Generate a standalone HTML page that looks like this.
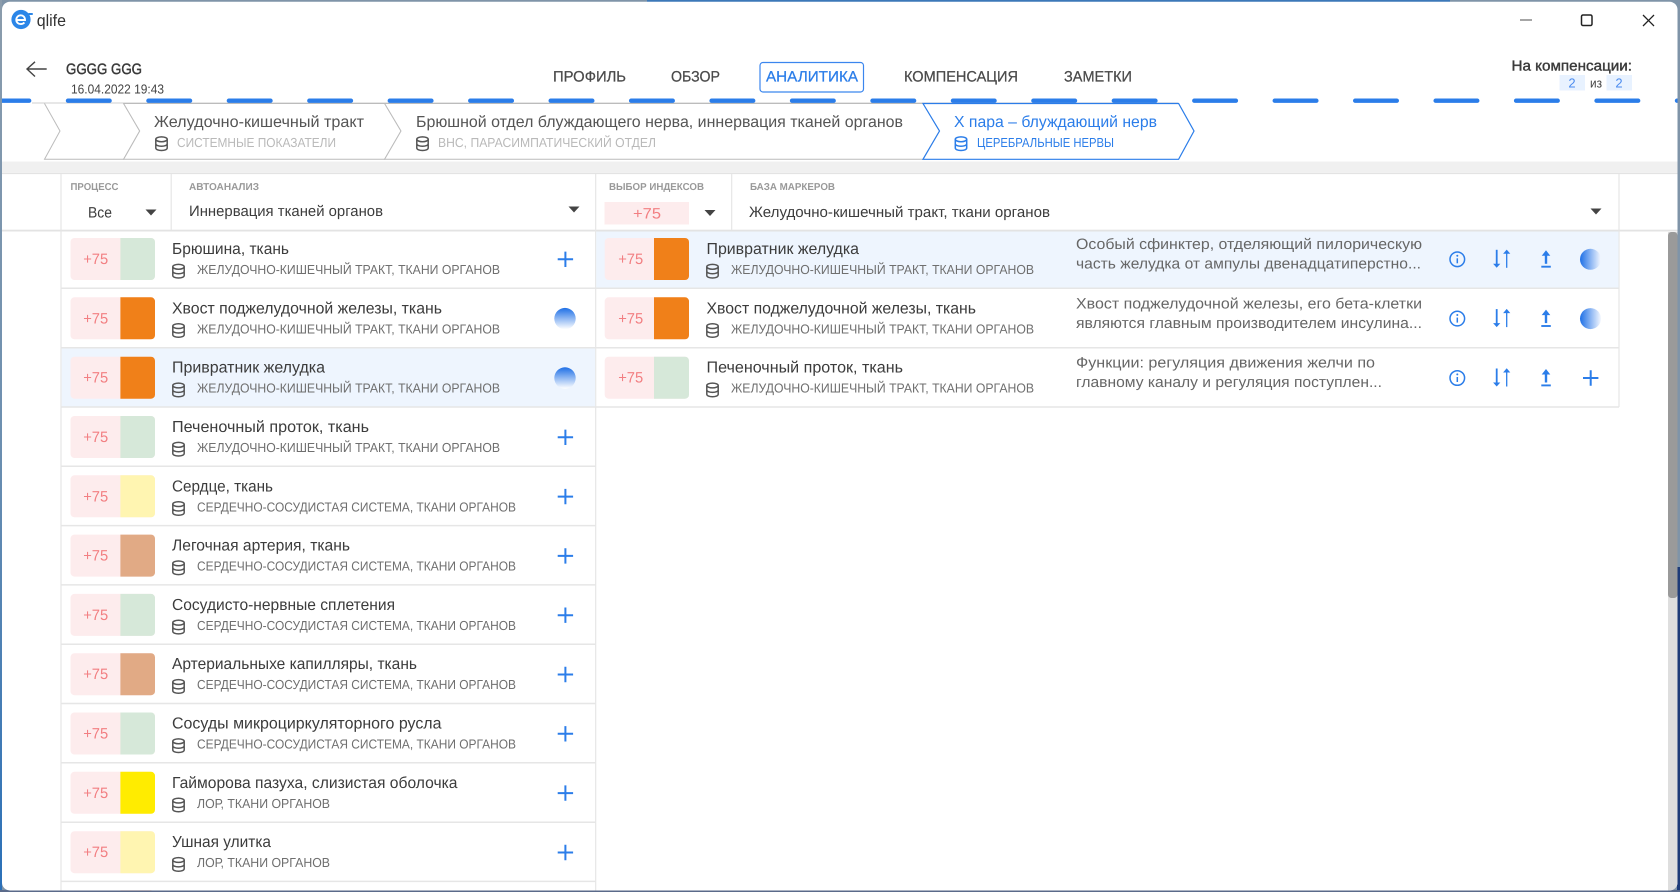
<!DOCTYPE html>
<html lang="ru"><head><meta charset="utf-8"><title>qlife</title>
<style>
html,body{margin:0;padding:0;width:1680px;height:892px;overflow:hidden;background:#fff}
svg{display:block}
text{font-family:"Liberation Sans",sans-serif;fill:#3a3a3a;text-rendering:geometricPrecision}
.t{font-size:16px;fill:#3c3c3c}
.s{font-size:13px;fill:#6f6f6f}
.n{font-size:15px;fill:#f27f82;text-anchor:middle}
.d{font-size:15px;fill:#666}
.l{font-size:10px;fill:#999;font-weight:bold}
.v{font-size:15px;fill:#3c3c3c}
.nav{font-size:15px;fill:#4a4a4a;stroke:#4a4a4a;stroke-width:.25px}
.b{font-size:16px;fill:#555}
.bs{font-size:13px;fill:#b9b9b9}
</style></head><body>
<svg width="1680" height="892" viewBox="0 0 1680 892" xmlns="http://www.w3.org/2000/svg">
<defs>
<linearGradient id="gv" x1="0" y1="0" x2="0" y2="1"><stop offset="0" stop-color="#1f70e6"/><stop offset="1" stop-color="#fff"/></linearGradient>
<linearGradient id="gh" x1="0" y1="0" x2="1" y2="0"><stop offset="0" stop-color="#1f70e6"/><stop offset="1" stop-color="#f4f8ff"/></linearGradient>
<linearGradient id="gl" x1="0" y1="0" x2="0" y2="1"><stop offset="0" stop-color="#8b9cac"/><stop offset=".5" stop-color="#6c8fb0"/><stop offset="1" stop-color="#2a70b8"/></linearGradient>
<g id="db" fill="none" stroke="#555" stroke-width="1.5"><ellipse cx="6.5" cy="2.8" rx="5.7" ry="2.4"/><path d="M.8 2.8V11.5C.8 13 3.3 14 6.5 14S12.2 13 12.2 11.5V2.8M.8 7.2C.8 8.7 3.3 9.7 6.5 9.7S12.2 8.7 12.2 7.2"/></g>
<g id="dbb" fill="none" stroke="#2b7de9" stroke-width="1.5"><ellipse cx="6.5" cy="2.8" rx="5.7" ry="2.4"/><path d="M.8 2.8V11.5C.8 13 3.3 14 6.5 14S12.2 13 12.2 11.5V2.8M.8 7.2C.8 8.7 3.3 9.7 6.5 9.7S12.2 8.7 12.2 7.2"/></g>
<path id="plus" d="M-7.7 0H7.7M0-7.7V7.7" stroke="#2b7de9" stroke-width="2" fill="none"/>
<path id="arr" d="M-5.5 2.5 0-3.5 5.5 2.5Z" transform="rotate(180)" fill="#444"/>
<g id="ctl"><circle cx="0" cy="0" r="7.3" fill="none" stroke="#2b7de9" stroke-width="1.5"/><path d="M0-1V4" stroke="#2b7de9" stroke-width="1.5"/><circle cx="0" cy="-3.6" r="1" fill="#2b7de9"/>
<path d="M39.4 -9.5V6" stroke="#2b7de9" stroke-width="1.8" fill="none"/><path d="M35.8 4.5H43L39.4 8.5Z" fill="#2b7de9"/>
<path d="M49.4 -6V8.5" stroke="#2b7de9" stroke-width="1.3" fill="none"/><path d="M45.8 -5.5H53L49.4 -9.7Z" fill="#2b7de9"/>
<path d="M88.7 -5V4.5" stroke="#2b7de9" stroke-width="2.4"/><path d="M84.4 -3.5H93L88.7 -9Z" fill="#2b7de9"/><path d="M84 7.4H93.5" stroke="#2b7de9" stroke-width="1.9"/></g>
<g id="lc"><rect x="70.5" y="0" width="84.5" height="42" rx="4" fill="#fdeced"/></g>
<g id="rc"><rect x="604.7" y="0" width="84.3" height="42" rx="4" fill="#fdeced"/></g>
<path id="ls" d="M120.4 0H151a4 4 0 0 1 4 4V38a4 4 0 0 1-4 4H120.4Z"/>
<path id="rs" d="M654 0H685a4 4 0 0 1 4 4V38a4 4 0 0 1-4 4H654Z"/>
<clipPath id="win"><rect x="2" y="1.7" width="1675.5" height="888.8" rx="8"/></clipPath>
</defs>

<rect width="1680" height="892" fill="#7f94a8"/>
<rect x="0" y="0" width="2" height="892" fill="url(#gl)"/>
<rect x="647" y="0" width="803" height="2" fill="#3c78b8"/>
<rect x="1677" y="567" width="3" height="325" fill="#1d3b78"/>
<rect x="0" y="890" width="1680" height="2" fill="#5a6a8a"/>
<rect x="2" y="1.7" width="1675.5" height="888.8" rx="8" fill="#fff"/>

<g clip-path="url(#win)">
<!-- title bar -->
<circle cx="21" cy="19.5" r="9.6" fill="#2b86e8"/>
<path d="M16.5 20H25C25 17 23 15.3 20.8 15.3C18.2 15.3 16.3 17.3 16.3 19.8C16.3 22.3 18.3 24.1 20.8 24.1C22.2 24.1 23.5 23.5 24.4 22.5" fill="none" stroke="#fff" stroke-width="1.9"/>
<rect x="28" y="13" width="5" height="2" rx="1" fill="#2b86e8"/>
<text x="36.7" y="26" style="font-size:16.5px;fill:#333" textLength="29.3" lengthAdjust="spacingAndGlyphs">qlife</text>
<path d="M1520 20H1532" stroke="#888" stroke-width="1.4"/>
<rect x="1581.5" y="15" width="10.5" height="10.5" rx="1.5" fill="none" stroke="#222" stroke-width="1.5"/>
<path d="M1643 15 1654 26M1654 15 1643 26" stroke="#222" stroke-width="1.3"/>

<!-- header -->
<path d="M46.7 69H27M35 61.8 27 69 35 76.5" fill="none" stroke="#444" stroke-width="1.4"/>
<text x="66" y="74" style="font-size:15px;fill:#3a3a3a;stroke:#3a3a3a;stroke-width:.45px" textLength="76" lengthAdjust="spacingAndGlyphs">GGGG GGG</text>
<text x="71" y="93.3" style="font-size:13px;fill:#444" textLength="93" lengthAdjust="spacingAndGlyphs">16.04.2022 19:43</text>

<text x="553" y="81.5" class="nav" textLength="73" lengthAdjust="spacingAndGlyphs">ПРОФИЛЬ</text>
<text x="671" y="81.5" class="nav" textLength="49" lengthAdjust="spacingAndGlyphs">ОБЗОР</text>
<rect x="760" y="62.5" width="103.5" height="29.5" rx="3" fill="#fff" stroke="#3b86ee" stroke-width="1.2"/>
<text x="766" y="81.5" class="nav" style="fill:#2b7de9;stroke:#2b7de9" textLength="92" lengthAdjust="spacingAndGlyphs">АНАЛИТИКА</text>
<text x="904" y="81.5" class="nav" textLength="114" lengthAdjust="spacingAndGlyphs">КОМПЕНСАЦИЯ</text>
<text x="1064" y="81.5" class="nav" textLength="68" lengthAdjust="spacingAndGlyphs">ЗАМЕТКИ</text>

<text x="1511.5" y="70.5" style="font-size:14.5px;fill:#3a3a3a;stroke:#3a3a3a;stroke-width:.4px" textLength="120.5" lengthAdjust="spacingAndGlyphs">На компенсации:</text>
<rect x="1559.5" y="75" width="25.5" height="15.5" fill="#e8f2ff"/><rect x="1606.5" y="75" width="25.5" height="15.5" fill="#e8f2ff"/>
<text x="1572" y="87.5" style="font-size:13px;fill:#4a8bef;text-anchor:middle">2</text>
<text x="1619" y="87.5" style="font-size:13px;fill:#4a8bef;text-anchor:middle">2</text>
<text x="1590" y="87.5" style="font-size:13px;fill:#444" textLength="12" lengthAdjust="spacingAndGlyphs">из</text>

<!-- breadcrumbs -->
<path d="M32 103H1178" stroke="#cfcfcf" stroke-width="1"/>
<path d="M44.5 103.5 60 131 44.5 159.3H123.6L139.7 131 123.6 103.5" fill="#fff" stroke="#bcbcbc" stroke-width="1"/>
<path d="M123.6 103.5H384.6L401 131 384.6 159.3H123.6L139.7 131Z" fill="#fff" stroke="#bcbcbc" stroke-width="1"/>
<path d="M384.6 103.5H923L939.5 131 923 159.3H384.6L401 131Z" fill="#fff" stroke="#bcbcbc" stroke-width="1"/>
<path d="M923 103.5H1178.6L1194 131 1178.6 159.3H923L939.5 131Z" fill="#fff" stroke="#2b7de9" stroke-width="1.2"/>

<text x="154" y="127" class="b" textLength="210" lengthAdjust="spacingAndGlyphs">Желудочно-кишечный тракт</text>
<use href="#db" x="155" y="136.5"/>
<text x="177" y="147" class="bs" textLength="159" lengthAdjust="spacingAndGlyphs">СИСТЕМНЫЕ ПОКАЗАТЕЛИ</text>
<text x="416" y="127" class="b" textLength="487" lengthAdjust="spacingAndGlyphs">Брюшной отдел блуждающего нерва, иннервация тканей органов</text>
<use href="#db" x="416" y="136.5"/>
<text x="438" y="147" class="bs" textLength="218" lengthAdjust="spacingAndGlyphs">ВНС, ПАРАСИМПАТИЧЕСКИЙ ОТДЕЛ</text>
<text x="954" y="127" class="b" style="fill:#2b7de9" textLength="203" lengthAdjust="spacingAndGlyphs">Х пара – блуждающий нерв</text>
<use href="#dbb" x="954.5" y="136.5"/>
<text x="977" y="147" style="font-size:13px;fill:#2b7de9" textLength="137" lengthAdjust="spacingAndGlyphs">ЦЕРЕБРАЛЬНЫЕ НЕРВЫ</text>

<!-- dashes -->
<path d="M-12.45 100.7H1720" stroke="#2b7de9" stroke-width="4.4" stroke-linecap="round" stroke-dasharray="41.6 38.85" fill="none"/>

<!-- band + filter -->
<rect x="2" y="161.5" width="1676" height="10.5" fill="#f0f0f0"/>
<rect x="2" y="172.5" width="1676" height="1.6" fill="#e3e3e3"/>
<rect x="2" y="229.7" width="1676" height="1.8" fill="#e3e3e3"/>
<path d="M61 174V892M595.7 174V892M171.2 174V230M731.7 174V230M1619 174V407" stroke="#e6e6e6" stroke-width="1.2" fill="none"/>
<text x="70.5" y="190" class="l" textLength="48" lengthAdjust="spacingAndGlyphs">ПРОЦЕСС</text>
<text x="189" y="190" class="l" textLength="70" lengthAdjust="spacingAndGlyphs">АВТОАНАЛИЗ</text>
<text x="609" y="190" class="l" textLength="95" lengthAdjust="spacingAndGlyphs">ВЫБОР ИНДЕКСОВ</text>
<text x="750" y="190" class="l" textLength="85" lengthAdjust="spacingAndGlyphs">БАЗА МАРКЕРОВ</text>
<text x="88" y="217.5" class="v" textLength="24" lengthAdjust="spacingAndGlyphs">Все</text>
<use href="#arr" x="151" y="212"/>
<text x="189" y="216" class="v" textLength="194" lengthAdjust="spacingAndGlyphs">Иннервация тканей органов</text>
<use href="#arr" x="574" y="209"/>
<rect x="604.5" y="202" width="84.5" height="22.5" fill="#fdeced"/>
<text x="647" y="218.5" class="n" textLength="28" lengthAdjust="spacingAndGlyphs">+75</text>
<use href="#arr" x="710" y="212.5"/>
<text x="749" y="217" class="v" textLength="301" lengthAdjust="spacingAndGlyphs">Желудочно-кишечный тракт, ткани органов</text>
<use href="#arr" x="1596" y="211"/>

<!-- selected row backgrounds -->
<rect x="61.7" y="347.9" width="533.4" height="58.8" fill="#eef5fe"/>
<rect x="596.3" y="231.5" width="1022.2" height="56.5" fill="#eef5fe"/>

<!-- separators -->
<path d="M61 288.3H1619M61 347.7H1619M61 407H1619M61 466.3H595.7M61 525.6H595.7M61 584.9H595.7M61 644.2H595.7M61 703.5H595.7M61 762.8H595.7M61 822.2H595.7M61 881.4H595.7" stroke="#e6e6e6" stroke-width="1.5" fill="none"/>

<!-- left rows -->
<g transform="translate(0,229)"><use href="#lc" y="9"/><use href="#ls" y="9" fill="#d6e8d9"/><text x="95.7" y="35" class="n" textLength="25" lengthAdjust="spacingAndGlyphs">+75</text><text x="172" y="25" class="t" textLength="117" lengthAdjust="spacingAndGlyphs">Брюшина, ткань</text><use href="#db" x="172" y="35"/><text x="197" y="45" class="s" textLength="303" lengthAdjust="spacingAndGlyphs">ЖЕЛУДОЧНО-КИШЕЧНЫЙ ТРАКТ, ТКАНИ ОРГАНОВ</text><use href="#plus" x="565.4" y="30.3"/></g>
<g transform="translate(0,288.3)"><use href="#lc" y="9"/><use href="#ls" y="9" fill="#f08019"/><text x="95.7" y="35" class="n" textLength="25" lengthAdjust="spacingAndGlyphs">+75</text><text x="172" y="25" class="t" textLength="270" lengthAdjust="spacingAndGlyphs">Хвост поджелудочной железы, ткань</text><use href="#db" x="172" y="35"/><text x="197" y="45" class="s" textLength="303" lengthAdjust="spacingAndGlyphs">ЖЕЛУДОЧНО-КИШЕЧНЫЙ ТРАКТ, ТКАНИ ОРГАНОВ</text><circle cx="565" cy="30.3" r="10.7" fill="url(#gv)"/></g>
<g transform="translate(0,347.7)"><use href="#lc" y="9"/><use href="#ls" y="9" fill="#f08019"/><text x="95.7" y="35" class="n" textLength="25" lengthAdjust="spacingAndGlyphs">+75</text><text x="172" y="25" class="t" textLength="153" lengthAdjust="spacingAndGlyphs">Привратник желудка</text><use href="#db" x="172" y="35"/><text x="197" y="45" class="s" textLength="303" lengthAdjust="spacingAndGlyphs">ЖЕЛУДОЧНО-КИШЕЧНЫЙ ТРАКТ, ТКАНИ ОРГАНОВ</text><circle cx="565" cy="30.3" r="10.7" fill="url(#gv)"/></g>
<g transform="translate(0,407)"><use href="#lc" y="9"/><use href="#ls" y="9" fill="#d6e8d9"/><text x="95.7" y="35" class="n" textLength="25" lengthAdjust="spacingAndGlyphs">+75</text><text x="172" y="25" class="t" textLength="197" lengthAdjust="spacingAndGlyphs">Печеночный проток, ткань</text><use href="#db" x="172" y="35"/><text x="197" y="45" class="s" textLength="303" lengthAdjust="spacingAndGlyphs">ЖЕЛУДОЧНО-КИШЕЧНЫЙ ТРАКТ, ТКАНИ ОРГАНОВ</text><use href="#plus" x="565.4" y="30.3"/></g>
<g transform="translate(0,466.3)"><use href="#lc" y="9"/><use href="#ls" y="9" fill="#fff5b1"/><text x="95.7" y="35" class="n" textLength="25" lengthAdjust="spacingAndGlyphs">+75</text><text x="172" y="25" class="t" textLength="101" lengthAdjust="spacingAndGlyphs">Сердце, ткань</text><use href="#db" x="172" y="35"/><text x="197" y="45" class="s" textLength="319" lengthAdjust="spacingAndGlyphs">СЕРДЕЧНО-СОСУДИСТАЯ СИСТЕМА, ТКАНИ ОРГАНОВ</text><use href="#plus" x="565.4" y="30.3"/></g>
<g transform="translate(0,525.6)"><use href="#lc" y="9"/><use href="#ls" y="9" fill="#e1aa85"/><text x="95.7" y="35" class="n" textLength="25" lengthAdjust="spacingAndGlyphs">+75</text><text x="172" y="25" class="t" textLength="178" lengthAdjust="spacingAndGlyphs">Легочная артерия, ткань</text><use href="#db" x="172" y="35"/><text x="197" y="45" class="s" textLength="319" lengthAdjust="spacingAndGlyphs">СЕРДЕЧНО-СОСУДИСТАЯ СИСТЕМА, ТКАНИ ОРГАНОВ</text><use href="#plus" x="565.4" y="30.3"/></g>
<g transform="translate(0,584.9)"><use href="#lc" y="9"/><use href="#ls" y="9" fill="#d6e8d9"/><text x="95.7" y="35" class="n" textLength="25" lengthAdjust="spacingAndGlyphs">+75</text><text x="172" y="25" class="t" textLength="223" lengthAdjust="spacingAndGlyphs">Сосудисто-нервные сплетения</text><use href="#db" x="172" y="35"/><text x="197" y="45" class="s" textLength="319" lengthAdjust="spacingAndGlyphs">СЕРДЕЧНО-СОСУДИСТАЯ СИСТЕМА, ТКАНИ ОРГАНОВ</text><use href="#plus" x="565.4" y="30.3"/></g>
<g transform="translate(0,644.2)"><use href="#lc" y="9"/><use href="#ls" y="9" fill="#e1aa85"/><text x="95.7" y="35" class="n" textLength="25" lengthAdjust="spacingAndGlyphs">+75</text><text x="172" y="25" class="t" textLength="245" lengthAdjust="spacingAndGlyphs">Артериальныхе капилляры, ткань</text><use href="#db" x="172" y="35"/><text x="197" y="45" class="s" textLength="319" lengthAdjust="spacingAndGlyphs">СЕРДЕЧНО-СОСУДИСТАЯ СИСТЕМА, ТКАНИ ОРГАНОВ</text><use href="#plus" x="565.4" y="30.3"/></g>
<g transform="translate(0,703.5)"><use href="#lc" y="9"/><use href="#ls" y="9" fill="#d6e8d9"/><text x="95.7" y="35" class="n" textLength="25" lengthAdjust="spacingAndGlyphs">+75</text><text x="172" y="25" class="t" textLength="269.5" lengthAdjust="spacingAndGlyphs">Сосуды микроциркуляторного русла</text><use href="#db" x="172" y="35"/><text x="197" y="45" class="s" textLength="319" lengthAdjust="spacingAndGlyphs">СЕРДЕЧНО-СОСУДИСТАЯ СИСТЕМА, ТКАНИ ОРГАНОВ</text><use href="#plus" x="565.4" y="30.3"/></g>
<g transform="translate(0,762.8)"><use href="#lc" y="9"/><use href="#ls" y="9" fill="#ffec00"/><text x="95.7" y="35" class="n" textLength="25" lengthAdjust="spacingAndGlyphs">+75</text><text x="172" y="25" class="t" textLength="285.5" lengthAdjust="spacingAndGlyphs">Гайморова пазуха, слизистая оболочка</text><use href="#db" x="172" y="35"/><text x="197" y="45" class="s" textLength="133" lengthAdjust="spacingAndGlyphs">ЛОР, ТКАНИ ОРГАНОВ</text><use href="#plus" x="565.4" y="30.3"/></g>
<g transform="translate(0,822.2)"><use href="#lc" y="9"/><use href="#ls" y="9" fill="#fff5b1"/><text x="95.7" y="35" class="n" textLength="25" lengthAdjust="spacingAndGlyphs">+75</text><text x="172" y="25" class="t" textLength="99" lengthAdjust="spacingAndGlyphs">Ушная улитка</text><use href="#db" x="172" y="35"/><text x="197" y="45" class="s" textLength="133" lengthAdjust="spacingAndGlyphs">ЛОР, ТКАНИ ОРГАНОВ</text><use href="#plus" x="565.4" y="30.3"/></g>
<g transform="translate(0,881.4)"><use href="#lc" y="9"/><use href="#ls" y="9" fill="#f5b48a"/></g>

<!-- right rows -->
<g transform="translate(0,229)"><use href="#rc" y="9"/><use href="#rs" y="9" fill="#f08019"/><text x="630.7" y="35" class="n" textLength="25" lengthAdjust="spacingAndGlyphs">+75</text><text x="706.5" y="25" class="t" textLength="152.5" lengthAdjust="spacingAndGlyphs">Привратник желудка</text><use href="#db" x="706" y="35"/><text x="731" y="45" class="s" textLength="303" lengthAdjust="spacingAndGlyphs">ЖЕЛУДОЧНО-КИШЕЧНЫЙ ТРАКТ, ТКАНИ ОРГАНОВ</text>
<text x="1076" y="20" class="d" textLength="346" lengthAdjust="spacingAndGlyphs">Особый сфинктер, отделяющий пилорическую</text><text x="1076" y="39.5" class="d" textLength="345" lengthAdjust="spacingAndGlyphs">часть желудка от ампулы двенадцатиперстно...</text>
<use href="#ctl" x="1457.3" y="30.3"/><circle cx="1590.5" cy="30.3" r="10.5" fill="url(#gh)"/></g>
<g transform="translate(0,288.3)"><use href="#rc" y="9"/><use href="#rs" y="9" fill="#f08019"/><text x="630.7" y="35" class="n" textLength="25" lengthAdjust="spacingAndGlyphs">+75</text><text x="706.5" y="25" class="t" textLength="269.5" lengthAdjust="spacingAndGlyphs">Хвост поджелудочной железы, ткань</text><use href="#db" x="706" y="35"/><text x="731" y="45" class="s" textLength="303" lengthAdjust="spacingAndGlyphs">ЖЕЛУДОЧНО-КИШЕЧНЫЙ ТРАКТ, ТКАНИ ОРГАНОВ</text>
<text x="1076" y="20" class="d" textLength="346" lengthAdjust="spacingAndGlyphs">Хвост поджелудочной железы, его бета-клетки</text><text x="1076" y="39.5" class="d" textLength="346" lengthAdjust="spacingAndGlyphs">являются главным производителем инсулина...</text>
<use href="#ctl" x="1457.3" y="30.3"/><circle cx="1590.5" cy="30.3" r="10.5" fill="url(#gh)"/></g>
<g transform="translate(0,347.7)"><use href="#rc" y="9"/><use href="#rs" y="9" fill="#d6e8d9"/><text x="630.7" y="35" class="n" textLength="25" lengthAdjust="spacingAndGlyphs">+75</text><text x="706.5" y="25" class="t" textLength="196.5" lengthAdjust="spacingAndGlyphs">Печеночный проток, ткань</text><use href="#db" x="706" y="35"/><text x="731" y="45" class="s" textLength="303" lengthAdjust="spacingAndGlyphs">ЖЕЛУДОЧНО-КИШЕЧНЫЙ ТРАКТ, ТКАНИ ОРГАНОВ</text>
<text x="1076" y="20" class="d" textLength="299" lengthAdjust="spacingAndGlyphs">Функции: регуляция движения желчи по</text><text x="1076" y="39.5" class="d" textLength="306" lengthAdjust="spacingAndGlyphs">главному каналу и регуляция поступлен...</text>
<use href="#ctl" x="1457.3" y="30.3"/><use href="#plus" x="1590.7" y="30.3"/></g>

<!-- scrollbar -->
<rect x="1668" y="232" width="9.5" height="660" fill="#dedede"/>
<rect x="1668" y="232" width="9.5" height="366" rx="3.5" fill="#9a9a9a"/>
</g>
</svg>
</body></html>
